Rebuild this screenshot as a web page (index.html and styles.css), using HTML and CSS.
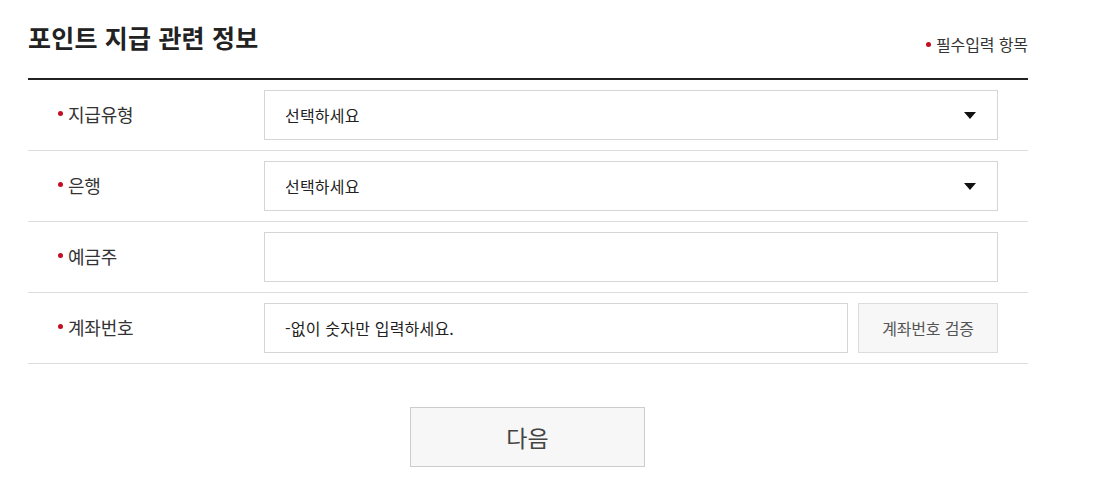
FILE: index.html
```html
<!DOCTYPE html>
<html lang="ko">
<head>
<meta charset="utf-8">
<link rel="stylesheet" href="styles.css">
</head>
<body>
<div class="wrap">
  <div class="head">
    <h2 class="title">포인트 지급 관련 정보</h2>
    <p class="req"><span class="dot"></span>필수입력 항목</p>
  </div>
  <div class="form">
    <div class="row">
      <div class="label"><span class="dot"></span>지급유형</div>
      <div class="field">
        <div class="select">선택하세요<span class="caret"></span></div>
      </div>
    </div>
    <div class="row">
      <div class="label"><span class="dot"></span>은행</div>
      <div class="field">
        <div class="select">선택하세요<span class="caret"></span></div>
      </div>
    </div>
    <div class="row">
      <div class="label"><span class="dot"></span>예금주</div>
      <div class="field">
        <div class="input"></div>
      </div>
    </div>
    <div class="row">
      <div class="label"><span class="dot"></span>계좌번호</div>
      <div class="field">
        <div class="input">-없이 숫자만 입력하세요.</div>
        <button class="verify">계좌번호 검증</button>
      </div>
    </div>
  </div>
  <div class="actions">
    <button class="next">다음</button>
  </div>
</div>
</body>
</html>
```
FILE: styles.css
```css
* { box-sizing: border-box; }
body {
  margin: 0;
  background: #fff;
  font-family: "Noto Sans CJK KR", "Noto Sans", sans-serif;
  color: #333;
}
.wrap {
  width: 1000px;
  margin-left: 28px;
}
.head {
  height: 80px;
  display: flex;
  justify-content: space-between;
  border-bottom: 2px solid #222;
}
.title {
  margin: 0;
  padding-top: 19px;
  font-size: 25px;
  line-height: 36px;
  font-weight: 700;
  letter-spacing: 0.2px;
  color: #222;
}
.req {
  margin: 0 0 24px;
  align-self: flex-end;
  font-size: 16px;
  line-height: 20px;
  color: #333;
  display: flex;
  align-items: center;
  letter-spacing: -0.1px;
}
.dot {
  display: inline-block;
  width: 5px;
  height: 5px;
  border-radius: 50%;
  background: #c40d1e;
  margin-right: 5px;
}
.req .dot { margin-right: 5px; }
.row {
  display: flex;
  align-items: center;
  padding: 10px 0;
  border-bottom: 1px solid #ddd;
}
.label {
  width: 236px;
  padding-left: 30px;
  padding-bottom: 3px;
  display: flex;
  align-items: center;
  font-size: 18px;
  color: #333;
  letter-spacing: -0.2px;
}
.field {
  display: flex;
  gap: 10px;
  width: 734px;
}
.select, .input {
  flex: 1;
  height: 50px;
  border: 1px solid #d5d5d5;
  padding: 0 20px;
  display: flex;
  align-items: center;
  justify-content: space-between;
  font-size: 16px;
  color: #222;
  letter-spacing: 0.2px;
}
.caret {
  width: 0;
  height: 0;
  border-left: 6px solid transparent;
  border-right: 6px solid transparent;
  border-top: 7px solid #111;
  margin-right: 1px;
}
.verify {
  width: 140px;
  height: 50px;
  border: 1px solid #ddd;
  background: #f7f7f7;
  font-family: inherit;
  font-size: 16px;
  color: #555;
  letter-spacing: -0.2px;
}
.actions {
  display: flex;
  justify-content: center;
  padding-top: 43px;
}
.next {
  width: 235px;
  height: 60px;
  border: 1px solid #ccc;
  background: #f7f7f7;
  font-family: inherit;
  font-size: 23px;
  color: #444;
  margin-left: -1px;
}
```
